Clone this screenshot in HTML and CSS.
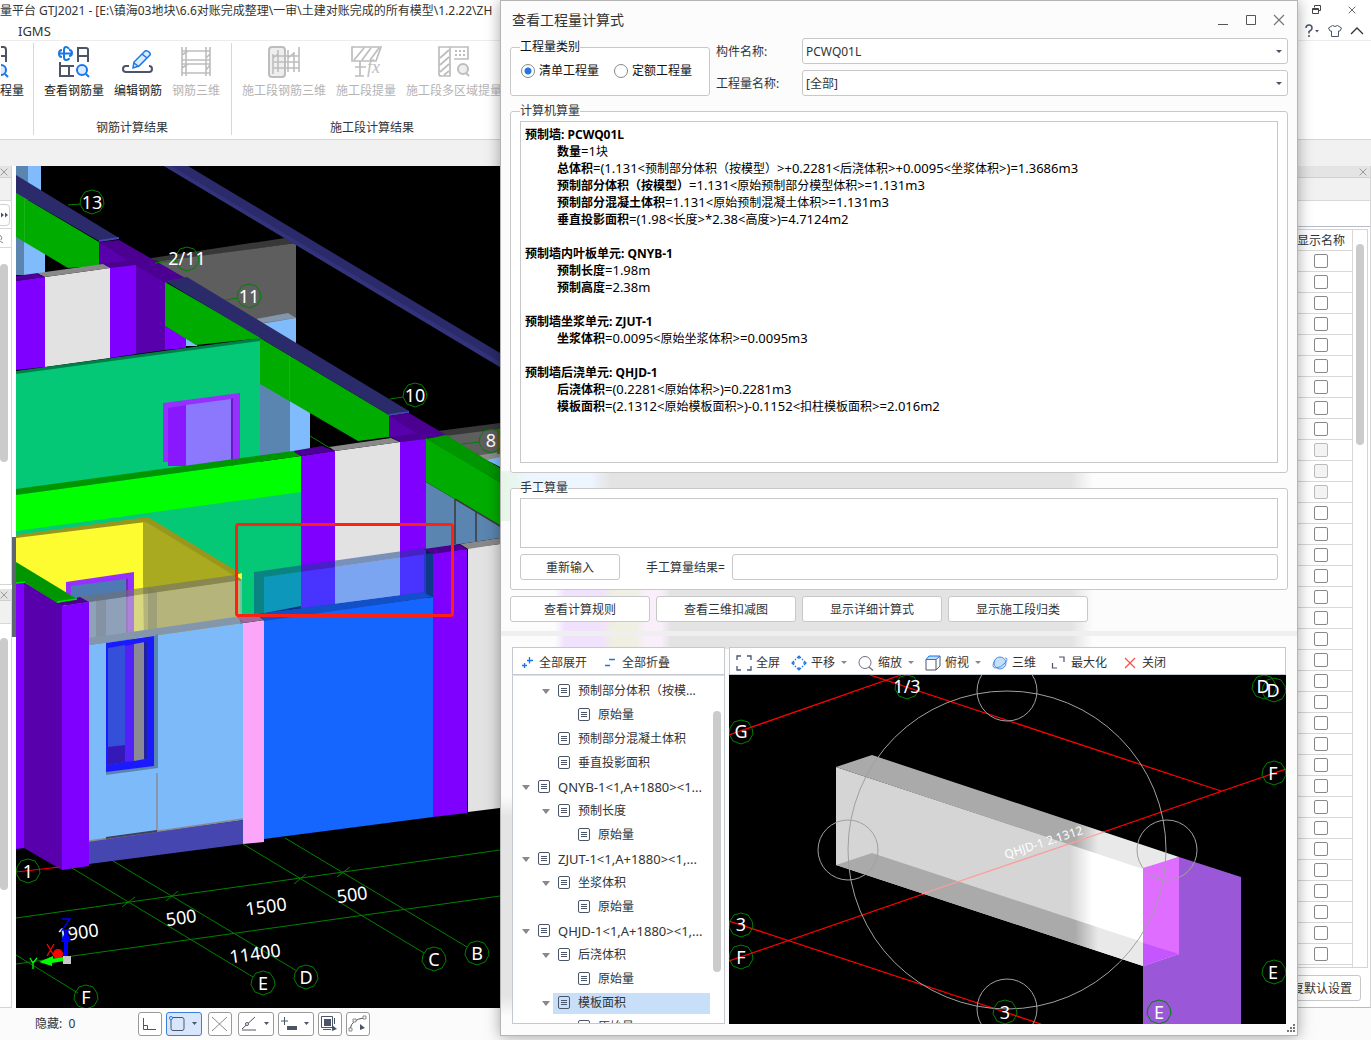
FILE: index.html
```html
<!DOCTYPE html>
<html lang="zh-CN">
<head>
<meta charset="utf-8">
<title>GTJ2021 - 查看工程量计算式</title>
<link rel="stylesheet" href="styles.css">
</head>
<body>
<svg class="defs" aria-hidden="true">
  <defs><path id="bubble" d="M13 1 20 3 24 9 25 15 21 22 13 25 5 22 1 15 2 9 6 3Z" fill="none" stroke="#008000"/></defs>
  <symbol id="doc" viewBox="0 0 12 14"><rect x=".5" y=".5" width="11" height="12" rx="1.5" fill="none" stroke="#4a5568"/><path d="M3 4.5h6M3 6.5h6M3 8.5h6" stroke="#4a5568"/></symbol>
  <symbol id="close" viewBox="0 0 12 12"><path d="M1 1 11 11M11 1 1 11" fill="none" stroke="currentColor" stroke-width="1.2"/></symbol>
</svg>
<div class="app">
  <header class="titlebar">
    <h1>量平台 GTJ2021 - [E:\镇海03地块\6.6对账完成整理\一审\土建对账完成的所有模型\1.2.22\ZH</h1>
    <div class="window-tools">
      <button aria-label="还原"><svg width="12" height="12"><path d="M3.500 3.500v-2h6v5h-2M1.500 4.500h6v5h-6zM1.500 5.500h6" fill="none" stroke="#444"/></svg></button>
      <button aria-label="关闭"><svg width="8" height="8" color="#444"><use href="#close"/></svg></button>
    </div>
  </header>
  <nav class="menubar">
    <a href="#igms">IGMS</a>
    <div class="menu-tools">
      <button aria-label="帮助"><svg width="16" height="14"><path d="M2 4Q2 1 5 1T8 4Q8 6 5 7.500V9.500M5 11v2" fill="none" stroke="#4a5568" stroke-width="1.500"/><path d="M11 6h4l-2 2.500z" fill="#4a5568"/></svg></button>
      <button aria-label="皮肤"><svg width="14" height="14"><path d="M4.500 1.500Q7 3.500 9.500 1.500L13.500 4 12 7H10.500V12.500H3.500V7H2L.5 4Z" fill="none" stroke="#4a5568"/></svg></button>
      <button aria-label="收起"><svg width="14" height="8"><path d="M1 7 7 1 13 7" fill="none" stroke="#333" stroke-width="1.300"/></svg></button>
    </div>
  </nav>
  <section class="ribbon">
    <div class="group first">
      <div class="items">
        <button class="tool"><svg width="22" height="32"><path d="M0 1H2.500Q5 1 5 4V16M0 10H5" fill="none" stroke="#4a5568" stroke-width="2"/><circle cx="0" cy="24" r="5" fill="#dbeafe" stroke="#1677e8" stroke-width="2"/><path d="M4 28 7 31" stroke="#1677e8" stroke-width="2"/></svg>程量</button>
      </div>
    </div>
    <div class="group">
      <div class="items">
        <button class="tool"><svg width="32" height="32"><path d="M11 3Q10 1 8 1Q6 1 6 4V11Q6 14 8 14Q11 14 11 12M1 7.500H13M4 4Q1 4 1 7.500T4 11M11 4Q14 4 14 7T11 10" fill="none" stroke="#1677e8" stroke-width="2"/><path d="M20 16V2H28Q30 2 30 4V16M20 10H30M2 16V30H16M2 20H16M11 20V30" fill="none" stroke="#4a5568" stroke-width="2"/><circle cx="24" cy="24" r="5" fill="#dbeafe" stroke="#1677e8" stroke-width="2"/><path d="M28 28 31 31" stroke="#1677e8" stroke-width="2"/></svg>查看钢筋量</button>
        <button class="tool"><svg width="32" height="32"><path d="M7 20H4Q1 20 1 23T4 26H27Q30 26 30 23T27 20" fill="none" stroke="#4a5568" stroke-width="2"/><path d="M11 22 12 16 23 5Q25 4 27 6T28 9L17 20ZM20 8 25 12M12 17 16 20" fill="#dbeafe" stroke="#1677e8" stroke-width="1.500"/></svg>编辑钢筋</button>
        <button class="tool" disabled><svg width="32" height="32"><path d="M2 1V30M6 1V30M26 1V30M30 1V30M2 5H30M2 14H30M2 18H30M2 27H30M2 9 8 5M2 22 8 18M26 12 30 8M26 24 30 19" fill="none" stroke="#bdbdbd" stroke-width="1.600"/></svg>钢筋三维</button>
      </div>
      <p>钢筋计算结果</p>
    </div>
    <div class="group wide">
      <div class="items">
        <button class="tool" disabled><svg width="32" height="32"><rect x="1" y="1" width="16" height="30" rx="3" fill="#eee" stroke="#bdbdbd" stroke-width="2"/><path d="M5 8V28M10 4V26M20 4V26M26 6V26M31 1V26M5 10H31M5 16H31M5 22H31M5 12 10 8M20 12 26 7" fill="none" stroke="#bdbdbd" stroke-width="1.600"/></svg>施工段钢筋三维</button>
        <button class="tool" disabled><svg width="32" height="32"><path d="M2 15V1H31L26 15ZM4 14 14 2M12 14 21 2M20 14 29 2M10 15V30M5 21H16M5 30H14" fill="none" stroke="#bdbdbd" stroke-width="1.700"/><text x="17" y="27" class="fx">fx</text></svg>施工段提量</button>
        <button class="tool" disabled><svg width="32" height="32"><path d="M1 1H12V30H3Q1 30 1 28ZM2 12 11 4M2 19 11 11M2 26 11 18M6 29 11 25M12 1H30V13H16" fill="none" stroke="#bdbdbd" stroke-width="1.700"/><path d="M17 5H28M17 9H28" stroke="#bdbdbd" stroke-width="2" stroke-dasharray="2 2"/><circle cx="25" cy="23" r="5" fill="#eee" stroke="#bdbdbd" stroke-width="2"/><path d="M28 27 31 30" stroke="#bdbdbd" stroke-width="2"/></svg>施工段多区域提量</button>
      </div>
      <p>施工段计算结果</p>
    </div>
  </section>
  <div class="strip"></div>
  <main class="workspace">
    <aside class="left">
      <div class="dock">
        <div class="dock-head"><svg width="8" height="8"><use href="#close"/></svg></div>
        <div class="dock-sub"></div>
        <div class="dock-row"><svg width="10" height="22"><path d="M0 .5H6Q9.500 .5 9.500 4V18Q9.500 21.500 6 21.500H0" fill="none" stroke="#d0d0d0"/><path d="M1 8.500 4 11 1 13.500ZM5 8.500 8 11 5 13.500Z" fill="#4a5568"/></svg></div>
        <div class="dock-search"><svg width="4" height="10"><path d="M0 1Q3 3 1 6M0 7 3 9" fill="none" stroke="#888"/></svg></div>
        <div class="thumb"></div>
      </div>
      <div class="dock lower">
        <div class="dock-head"><svg width="8" height="8"><use href="#close"/></svg></div>
        <div class="dock-sub"></div>
        <div class="thumb"></div>
      </div>
    </aside>
    <div class="splitter"><i></i></div>
    <svg class="scene" role="img" aria-label="三维模型">
      <g transform="translate(-16 -166)">
        <path fill="#5a85b0" d="M16 166H28V200H16ZM16 236 24 240V275H16Z"/>
        <path fill="#80bcfc" d="M28 166H41V200L28 190ZM24 241 45 252V275H24Z"/>
        <path fill="#383838" d="M145 259 285 238 296 243 163 262Z"/>
        <path fill="#5e5e5e" d="M155 262 296 243V345L200 300Z"/>
        <path fill="#8496ac" d="M256 319 288 313 296 318 263 323Z"/>
        <path fill="#80bcfc" d="M260 324 296 318V343L280 340Z"/>
        <path fill="#2b2b6b" d="M164 166H188L500 353V367Z"/>
        <path fill="#33337c" d="M164 166H171L500 362V367Z"/>
        <path fill="#00ac00" d="M16 193 99 242V266L68 268 16 237Z"/>
        <path fill="#1db01d" d="M24 198h1v43h-1z"/>
        <path fill="#2b2b6b" d="M16 175 119 238 99 241 16 193Z"/>
        <path fill="#4646b0" d="M99 240 119 237V239L99 242Z"/>
        <path fill="#5800ac" d="M99 242 136 262 165 281V350L136 354 99 300Z"/>
        <path fill="#4b0091" d="M99 242 119 240 187 279 165 283 130 262Z"/>
        <path fill="#4b0091" d="M102 264 136 259V265L110 269ZM16 276 38 273 45 277 16 281Z"/>
        <path fill="#7f00ff" d="M110 268 136 265V354L110 358ZM16 281 45 277V367L16 370ZM165 326 186 338V348L165 350Z"/>
        <path fill="#80bcfc" d="M186 338 198 346H186Z"/>
        <path fill="#e2e2e2" d="M45 277 110 268V358L45 367Z"/>
        <path fill="#898989" d="M38 273 103 264 110 268 45 277Z"/>
        <path fill="#5a85b0" d="M260 383 290 400V456H260Z"/>
        <path fill="#80bcfc" d="M290 400 310 411V452H290Z"/>
        <path fill="#00ac00" d="M165 282 262 338 196 345 165 326ZM255 335 389 415V437L358 441 255 381Z"/>
        <path fill="#1db01d" d="M289 356h1v44h-1z"/>
        <path fill="#2b2b6b" d="M165 281 187 277 409 411 389 415Z"/>
        <path fill="#4646b0" d="M389 414 409 411V413L389 416Z"/>
        <path fill="#5e5e5e" d="M438 436 500 428V465Z"/><path fill="#383838" d="M438 431 500 423V429L445 436Z"/>
        <path fill="#8c8c8c" d="M475 456 500 452V466Z"/><path fill="#80bcfc" d="M487 460 500 457V467Z"/>
        <path fill="#6a5a10" d="M497 430h3v24h-3z"/>
        <path fill="#05c877" d="M16 373 260 340V470L301 492V606L230 620 16 560Z"/>
        <path fill="#008048" d="M16 371 260 338V341L16 374Z"/>
        <path fill="#9630ff" d="M163 403 240 393V462H163Z"/>
        <path fill="#8a18ff" d="M168 408 186 405V466H168Z"/>
        <path fill="#8c78fc" d="M186 405 231 399V466H186Z"/><path fill="#6a1ac0" d="M231 399 233 398V466H231Z"/>
        <path fill="#00ff00" d="M16 495 301 456V492L16 531Z"/>
        <path fill="#009600" d="M16 489 293 451 301 456 16 495Z"/>
        <path fill="#7f00ff" d="M301 456 335 451V606L301 610ZM400 442 426 438V600H400ZM433 553 467 549V813L433 817Z"/>
        <path fill="#e2e2e2" d="M335 451 400 442V600L335 606ZM468 548 500 544V808L468 812Z"/>
        <path fill="#898989" d="M329 447 391 438 400 442 335 451ZM460 544 500 538V544L468 549Z"/>
        <path fill="#5a85b0" d="M426 482 500 526V538L460 544 426 550Z"/>
        <path fill="#4b0091" d="M293 451 322 446 335 451 301 456ZM389 416 409 413 446 435 426 439 400 442 391 437Z"/>
        <path fill="#5800ac" d="M389 416 416 433 389 438Z"/>
        <path fill="#00ac00" d="M426 438 500 482V526L426 482Z"/><path fill="#009600" d="M426 439 446 435 500 468V482Z"/>
        <path stroke="#3a3a3a" stroke-width="1.500" fill="none" d="M455 499V544M476 512V541M455 499 500 526"/>
        <path fill="#fdfc30" d="M16 537 143 520V645L16 660Z"/>
        <path fill="#aaaa20" d="M143 520 240 575V630L143 645Z"/>
        <path fill="#fdfc30" d="M143 580 144 640 134 642V588ZM235 575 242 573V580Z"/>
        <path fill="#9a961c" d="M16 535 148 517 240 573 235 576 146 522 16 538Z"/>
        <path fill="#9630ff" d="M66 582 134 572V645H66Z"/><path fill="#4e7ab4" d="M71 586 126 579V645H71Z"/>
        <path fill="#6d28c0" d="M126 579 128 578V645H126Z"/>
        <path fill="#7cbafa" d="M89 645 243 623V820L89 841Z"/>
        <path fill="#4646b0" d="M89 841 243 820V844L89 864Z"/>
        <path stroke="#8a8a90" fill="none" stroke-width="1.500" d="M89 841 243 819M157 773V831"/>
        <path fill="#bebebe" opacity=".58" d="M89 602 242 580V618L89 645Z"/>
        <path fill="#707070" opacity=".6" d="M77 597 235 575 242 580 89 602Z"/>
        <path fill="#707070" opacity=".3" d="M96 595 106 599V641L96 642ZM148 587 157 592V634L148 635Z"/>
        <path fill="#8496ac" d="M89 638 235 617 243 623 89 645Z"/>
        <path fill="#5a85b0" d="M154 636 158 634V768L106 775V771Z"/>
        <path fill="#1a1aff" d="M106 643 154 636V766L106 772Z"/>
        <path fill="#3450d8" d="M108 648 125 645V762L108 765Z"/><path fill="#5220f8" d="M125 646 134 644V761L125 762Z"/>
        <path fill="#8a8a96" d="M134 644 145 642V759L134 761Z"/><path fill="#3418b8" d="M108 747 125 745V762L108 765Z"/><path fill="#2020a0" d="M144 642h3v117h-3z"/>
        <path stroke="#404060" stroke-width="2" d="M106 838 157 831"/>
        <path fill="#fba6f8" d="M243 623 264 620V842L243 844Z"/><path fill="#9c6a9a" d="M236 617 256 614 264 620 243 623Z"/>
        <path fill="#1466ff" d="M264 619 433 597V817L264 839Z"/><path fill="#1150c8" d="M256 614 424 592 433 597 264 621Z"/>
        <path fill="#1466ff" opacity=".5" d="M264 577 433 553V597L424 592 264 613Z"/>
        <path fill="#104090" opacity=".5" d="M254 572 424 548 433 553 264 577V613L254 614ZM424 554 433 553V597L424 592Z"/>
        <path fill="#4b0091" d="M424 549 460 544 467 549 433 554ZM57 603 80 597 89 602 62 606Z"/>
        <path fill="#7f00ff" d="M16 583 24 582V848L16 849ZM62 606 89 602V866L62 870Z"/>
        <path fill="#5800ac" d="M24 582 62 605V870L24 848Z"/>
        <path fill="#009600" d="M16 562 77 599 57 603 24 582 16 583Z"/><path stroke="#00e000" stroke-width="1.500" fill="none" d="M16 583 25 582M57 602 77 599"/>
        <rect x="236.500" y="524.500" width="216" height="91" rx="2" fill="none" stroke="#ff2212" stroke-width="3"/>
        <g fill="none" stroke="#008000">
          <path d="M16 918 500 850M16 964 500 896M72 868 253 977M113 861 297 971M243 844 424 953M285 838 467 947M16 955 78 993M122 907 135 897M166 901 178 891M294 884 306 874M337 877 350 867M68 205 81 204M155 263 178 260M225 300 238 298M390 399 403 397M462 444 479 442M310 436 330 448"/>
          <path stroke="#f00" d="M16 872 60 867"/>
        </g>
        <g>
          <use href="#bubble" x="79" y="189"/><use href="#bubble" x="174" y="246"/><use href="#bubble" x="236" y="283"/><use href="#bubble" x="402" y="382"/><use href="#bubble" x="478" y="428"/><use href="#bubble" x="15" y="858"/><use href="#bubble" x="250" y="970"/><use href="#bubble" x="293" y="964"/><use href="#bubble" x="421" y="946"/><use href="#bubble" x="464" y="940"/><use href="#bubble" x="73" y="984"/>
        </g>
        <g class="marks">
          <text x="92" y="209">13</text><text x="187" y="265">2/11</text><text x="249" y="303">11</text><text x="415" y="402">10</text><text x="491" y="447">8</text><text x="28" y="878">1</text><text x="263" y="990">E</text><text x="306" y="984">D</text><text x="434" y="966">C</text><text x="477" y="960">B</text><text x="86" y="1004">F</text>
          <text transform="translate(79 939) rotate(-8)">1900</text><text transform="translate(182 924) rotate(-8)">500</text><text transform="translate(267 913) rotate(-8)">1500</text><text transform="translate(353 901) rotate(-8)">500</text><text transform="translate(256 960) rotate(-8)">11400</text>
        </g>
        <path fill="#00f" d="M64 958V942H61L66 929 71 942H68V958Z"/><circle cx="58" cy="954" r="5" fill="#f00"/>
        <path fill="#0f0" d="M64 957 53 959V956L39 962 52 966V963L64 961Z"/><path fill="#c8c8c8" d="M63 956h8v8h-8z"/>
        <path fill="none" stroke-width="1.300" stroke="#00f" d="M62 919H70L62 930H70"/><path fill="none" stroke-width="1.300" stroke="#f00" d="M47 944 54 956M54 944 47 956"/><path fill="none" stroke-width="1.300" stroke="#0f0" d="M30 958 33 963 37 958M33 963V969"/>
      </g>
    </svg>
    <aside class="right">
      <div class="dock-head"><svg width="8" height="8"><use href="#close"/></svg></div>
      <div class="dock-sub"></div>
      <div class="blank"></div>
      <div class="list">
        <table>
          <thead><tr><th>显示名称</th></tr></thead>
          <tbody>
            <tr><td><input type="checkbox" aria-label="显示名称 1"></td></tr>
            <tr><td><input type="checkbox" aria-label="显示名称 2"></td></tr>
            <tr><td><input type="checkbox" aria-label="显示名称 3"></td></tr>
            <tr><td><input type="checkbox" aria-label="显示名称 4"></td></tr>
            <tr><td><input type="checkbox" aria-label="显示名称 5"></td></tr>
            <tr><td><input type="checkbox" aria-label="显示名称 6"></td></tr>
            <tr><td><input type="checkbox" aria-label="显示名称 7"></td></tr>
            <tr><td><input type="checkbox" aria-label="显示名称 8"></td></tr>
            <tr><td><input type="checkbox" aria-label="显示名称 9"></td></tr>
            <tr><td><input type="checkbox" aria-label="显示名称 10" disabled></td></tr>
            <tr><td><input type="checkbox" aria-label="显示名称 11" disabled></td></tr>
            <tr><td><input type="checkbox" aria-label="显示名称 12" disabled></td></tr>
            <tr><td><input type="checkbox" aria-label="显示名称 13"></td></tr>
            <tr><td><input type="checkbox" aria-label="显示名称 14"></td></tr>
            <tr><td><input type="checkbox" aria-label="显示名称 15"></td></tr>
            <tr><td><input type="checkbox" aria-label="显示名称 16"></td></tr>
            <tr><td><input type="checkbox" aria-label="显示名称 17"></td></tr>
            <tr><td><input type="checkbox" aria-label="显示名称 18"></td></tr>
            <tr><td><input type="checkbox" aria-label="显示名称 19"></td></tr>
            <tr><td><input type="checkbox" aria-label="显示名称 20"></td></tr>
            <tr><td><input type="checkbox" aria-label="显示名称 21"></td></tr>
            <tr><td><input type="checkbox" aria-label="显示名称 22"></td></tr>
            <tr><td><input type="checkbox" aria-label="显示名称 23"></td></tr>
            <tr><td><input type="checkbox" aria-label="显示名称 24"></td></tr>
            <tr><td><input type="checkbox" aria-label="显示名称 25"></td></tr>
            <tr><td><input type="checkbox" aria-label="显示名称 26"></td></tr>
            <tr><td><input type="checkbox" aria-label="显示名称 27"></td></tr>
            <tr><td><input type="checkbox" aria-label="显示名称 28"></td></tr>
            <tr><td><input type="checkbox" aria-label="显示名称 29"></td></tr>
            <tr><td><input type="checkbox" aria-label="显示名称 30"></td></tr>
            <tr><td><input type="checkbox" aria-label="显示名称 31"></td></tr>
            <tr><td><input type="checkbox" aria-label="显示名称 32"></td></tr>
            <tr><td><input type="checkbox" aria-label="显示名称 33"></td></tr>
            <tr><td><input type="checkbox" aria-label="显示名称 34"></td></tr>
            <tr><td><input type="checkbox" aria-label="显示名称 35"></td></tr>
          </tbody>
        </table>
        <div class="track"><div class="thumb"></div></div>
      </div>
      <div class="foot"><button class="btn">恢复默认设置</button></div>
    </aside>
  </main>
  <footer class="status">
    <span>隐藏:&nbsp; 0</span>
    <div class="snap">
      <button aria-label="正交"><svg width="24" height="22"><path d="M5.500 5V16.500H18M5.500 12.500H9.500V16" fill="none" stroke="#4a5568"/></svg></button>
      <button class="on" aria-label="矩形捕捉"><svg width="36" height="22"><rect x="5" y="4.500" width="13" height="13" rx="2" fill="none" stroke="#4a5568"/><circle cx="5" cy="5" r="1.500" fill="#fff" stroke="#1677e8"/><path d="M26 9h5l-2.500 3z" fill="#4a5568"/></svg></button>
    </div>
    <div class="snap"><button aria-label="交点"><svg width="24" height="22"><path d="M4 4 19 18M19 4 4 18" fill="none" stroke="#888"/></svg></button></div>
    <div class="snap">
      <button aria-label="角度"><svg width="36" height="22"><path d="M4 16 17 4" stroke="#4a5568"/><path d="M4 17h14" stroke="#aaa" stroke-width="2"/><circle cx="9" cy="11" r="1.500" fill="#fff" stroke="#4a5568"/><path d="M26 9h5l-2.500 3z" fill="#4a5568"/></svg></button>
      <button aria-label="偏移"><svg width="36" height="22"><path d="M3 8H10M6.500 4V12" stroke="#4a5568"/><rect x="9" y="13" width="10" height="4" fill="#4a5568"/><path d="M26 9h5l-2.500 3z" fill="#4a5568"/></svg></button>
      <button aria-label="选择"><svg width="24" height="22"><rect x="6" y="6" width="7" height="7" fill="#4a5568"/><path d="M3.500 3.500h11v11h-11zM5 16.500h8M16.500 5v6" fill="none" stroke="#4a5568"/><path d="M14 12 19 16 14 18Z" fill="#4a5568"/></svg></button>
      <button aria-label="曲线"><svg width="24" height="22"><path d="M4 16Q6 6 18 5" fill="none" stroke="#4a5568"/><path d="M3 15h3v3H3zM7 6h3v3H7zM17 3h3v3h-3z" fill="#fff" stroke="#888"/><path d="M14 11 19 15 14 17Z" fill="#4a5568"/></svg></button>
    </div>
  </footer>
</div>

<section class="dialog" role="dialog" aria-labelledby="dlg-title">
  <header class="dlg-title">
    <h2 id="dlg-title">查看工程量计算式</h2>
    <div class="dlg-tools">
      <button aria-label="最小化"><svg width="12" height="12"><path d="M1 10.500h10" stroke="#555"/></svg></button>
      <button aria-label="最大化"><svg width="12" height="12"><path d="M1.500 1.500h9v9h-9z" fill="none" stroke="#555"/></svg></button>
      <button aria-label="关闭"><svg width="12" height="12" color="#777"><use href="#close"/></svg></button>
    </div>
  </header>
  <form class="filters">
    <fieldset class="kind">
      <legend>工程量类别</legend>
      <label><input type="radio" name="kind" checked>清单工程量</label>
      <label><input type="radio" name="kind">定额工程量</label>
    </fieldset>
    <label for="part">构件名称:</label>
    <div class="select"><select id="part"><option>PCWQ01L</option></select></div>
    <label for="qty">工程量名称:</label>
    <div class="select"><select id="qty"><option>[全部]</option></select></div>
  </form>
  <fieldset class="calc">
    <legend>计算机算量</legend>
    <div class="output">
      <h3>预制墙: PCWQ01L</h3>
      <p><b>数量</b>=1<em>块</em></p>
      <p><b>总体积</b>=(1.131&lt;<em>预制部分体积（按模型）</em>&gt;+0.2281&lt;<em>后浇体积</em>&gt;+0.0095&lt;<em>坐浆体积</em>&gt;)=1.3686m3</p>
      <p><b>预制部分体积（按模型）</b>=1.131&lt;<em>原始预制部分模型体积</em>&gt;=1.131m3</p>
      <p><b>预制部分混凝土体积</b>=1.131&lt;<em>原始预制混凝土体积</em>&gt;=1.131m3</p>
      <p><b>垂直投影面积</b>=(1.98&lt;<em>长度</em>&gt;*2.38&lt;<em>高度</em>&gt;)=4.7124m2</p>
      <h3>预制墙内叶板单元: QNYB-1</h3>
      <p><b>预制长度</b>=1.98m</p>
      <p><b>预制高度</b>=2.38m</p>
      <h3>预制墙坐浆单元: ZJUT-1</h3>
      <p><b>坐浆体积</b>=0.0095&lt;<em>原始坐浆体积</em>&gt;=0.0095m3</p>
      <h3>预制墙后浇单元: QHJD-1</h3>
      <p><b>后浇体积</b>=(0.2281&lt;<em>原始体积</em>&gt;)=0.2281m3</p>
      <p><b>模板面积</b>=(2.1312&lt;<em>原始模板面积</em>&gt;)-0.1152&lt;<em>扣柱模板面积</em>&gt;=2.016m2</p>
    </div>
  </fieldset>
  <fieldset class="manual">
    <legend>手工算量</legend>
    <textarea aria-label="手工算量"></textarea>
    <div class="manual-row">
      <button class="btn">重新输入</button>
      <label for="result">手工算量结果=</label>
      <input id="result" type="text">
    </div>
  </fieldset>
  <div class="actions">
    <button class="btn">查看计算规则</button>
    <button class="btn">查看三维扣减图</button>
    <button class="btn">显示详细计算式</button>
    <button class="btn">显示施工段归类</button>
  </div>
  <div class="divider"></div>
  <div class="viewer">
    <section class="pane">
      <div class="toolbar tree-tools">
        <button><svg width="12" height="14"><path d="M6 4.500H12M8.500 1V7.500M1 9.500H6M3.500 7V12" stroke="#1677e8" stroke-width="1.300"/></svg>全部展开</button>
        <button><svg width="12" height="14"><path d="M5 3.500H11M1 9.500H6" stroke="#1677e8" stroke-width="1.300"/></svg>全部折叠</button>
      </div>
      <div class="tree">
        <ul>
          <li class="l1 open"><span><svg><use href="#doc"/></svg>预制部分体积（按模...</span></li>
          <li class="l2"><span><svg><use href="#doc"/></svg>原始量</span></li>
          <li class="l1"><span><svg><use href="#doc"/></svg>预制部分混凝土体积</span></li>
          <li class="l1"><span><svg><use href="#doc"/></svg>垂直投影面积</span></li>
          <li class="l0 open"><span><svg><use href="#doc"/></svg>QNYB-1&lt;1,A+1880&gt;&lt;1...</span></li>
          <li class="l1 open"><span><svg><use href="#doc"/></svg>预制长度</span></li>
          <li class="l2"><span><svg><use href="#doc"/></svg>原始量</span></li>
          <li class="l0 open"><span><svg><use href="#doc"/></svg>ZJUT-1&lt;1,A+1880&gt;&lt;1,...</span></li>
          <li class="l1 open"><span><svg><use href="#doc"/></svg>坐浆体积</span></li>
          <li class="l2"><span><svg><use href="#doc"/></svg>原始量</span></li>
          <li class="l0 open"><span><svg><use href="#doc"/></svg>QHJD-1&lt;1,A+1880&gt;&lt;1,...</span></li>
          <li class="l1 open"><span><svg><use href="#doc"/></svg>后浇体积</span></li>
          <li class="l2"><span><svg><use href="#doc"/></svg>原始量</span></li>
          <li class="l1 open selected"><span><svg><use href="#doc"/></svg>模板面积</span></li>
          <li class="l2"><span><svg><use href="#doc"/></svg>原始量</span></li>
        </ul>
        <div class="thumb"></div>
      </div>
    </section>
    <section class="pane">
      <div class="toolbar">
        <button><svg width="16" height="16"><path d="M1 5V1H5M11 1H15V5M15 11V15H11M5 15H1V11" fill="none" stroke="#4a5568" stroke-width="1.300"/></svg>全屏</button>
        <button class="more"><svg width="16" height="16"><path d="M6 3 8 1 10 3M6 13 8 15 10 13M3 6 1 8 3 10M13 6 15 8 13 10M8 1V4M8 12V15M1 8H4M12 8H15M4 5 5 4M11 4 12 5M4 11 5 12M11 12 12 11" fill="none" stroke="#1677e8" stroke-width="1.200"/></svg>平移</button>
        <button class="more"><svg width="16" height="16"><circle cx="7" cy="7.500" r="6" fill="none" stroke="#6b7280"/><path d="M11 12 15 15.500" stroke="#6b7280" stroke-width="1.300"/></svg>缩放</button>
        <button class="more"><svg width="16" height="16"><path d="M1 4.500H11V15H1ZM15 1V11L11 15" fill="none" stroke="#4a5568"/><path d="M1 4.500 4 1H15L11 4.500Z" fill="#bfdbfe" stroke="#1677e8"/></svg>俯视</button>
        <button><svg width="16" height="16"><circle cx="8" cy="8" r="6" fill="#c7defa" stroke="#4b8fe8"/><path d="M3 5Q-1 12 3 13 9 13 13 8T13 3" fill="none" stroke="#4b8fe8"/></svg>三维</button>
        <button class="spaced"><svg width="16" height="16"><path d="M8 2H13V7M1.500 8V13H6" fill="none" stroke="#4a5568" stroke-width="1.200"/></svg>最大化</button>
        <button class="spaced"><svg width="16" height="16"><path d="M3 3 13 13M13 3 3 13" stroke="#ff4a4a" stroke-width="1.200"/></svg>关闭</button>
      </div>
      <svg class="scene" role="img" aria-label="构件三维视图">
        <defs>
          <linearGradient id="face" gradientUnits="userSpaceOnUse" x1="1070" y1="0" x2="1092" y2="0"><stop stop-color="#d5d5d5"/><stop offset="1" stop-color="#fff"/></linearGradient>
          <linearGradient id="edge" gradientUnits="userSpaceOnUse" x1="1075" y1="0" x2="1098" y2="0"><stop stop-color="#aaa"/><stop offset="1" stop-color="#e9e9e9"/></linearGradient>
        </defs>
        <g transform="translate(-729 -675)">
          <path stroke="#f00" stroke-width="1.300" fill="none" d="M729 735 901 675M870 675 1221 791M729 961 1286 769M729 921 1041 1024"/>
          <path fill="#9a58d8" d="M1143 868 1179 857 1241 877V1024H1143Z"/>
          <path fill="url(#face)" d="M836 767 1143 868V966L836 865Z"/>
          <path fill="url(#edge)" d="M836 767 872 755 1179 857 1143 869ZM836 865 872 853 1179 954 1143 966Z"/>
          <path fill="#df6dff" d="M1143 868 1179 857V954L1143 966Z"/><path fill="#c455ff" d="M1143 943 1179 954 1143 966Z"/>
          <path stroke="#ff9c9c" stroke-width="1.300" d="M922 894 1104 832"/>
          <g fill="none" stroke="#a0a0a0"><circle cx="1007" cy="850" r="159"/><circle cx="1007" cy="691" r="30"/><circle cx="848" cy="850" r="30"/><circle cx="1167" cy="850" r="30"/><circle cx="1007" cy="1009" r="30"/></g>
          <g><use href="#bubble" x="894" y="674"/><use href="#bubble" x="728" y="719"/><use href="#bubble" x="728" y="912"/><use href="#bubble" x="728" y="944"/><use href="#bubble" x="1251" y="674"/><use href="#bubble" x="1261" y="677"/><use href="#bubble" x="1261" y="760"/><use href="#bubble" x="1261" y="959"/><use href="#bubble" x="992" y="999"/><use href="#bubble" x="1146" y="999"/></g>
          <g class="marks"><text x="907" y="693">1/3</text><text x="741" y="738">G</text><text x="741" y="931">3</text><text x="741" y="964">F</text><text x="1263" y="693">D</text><text x="1273" y="697">D</text><text x="1273" y="780">F</text><text x="1273" y="979">E</text><text x="1005" y="1019">3</text><text x="1159" y="1019">E</text></g>
          <text class="tag" transform="translate(1006 859) rotate(-18)">QHJD-1 2.1312</text>
        </g>
      </svg>
    </section>
  </div>
  <svg class="grip" width="10" height="10"><path d="M7 0h2v2H7zM7 3h2v2H7zM4 3h2v2H4zM7 6h2v2H7zM4 6h2v2H4zM1 6h2v2H1z" fill="#777"/></svg>
</section>
</body>
</html>
```

FILE: styles.css
```css
* { box-sizing: border-box; }
html, body { height: 100%; margin: 0; }
body {
  position: relative;
  overflow: hidden;
  font: 12px/16px "Noto Sans", "Noto Sans CJK SC", sans-serif;
  color: #333;
  background: #fff;
}
h1, h2, h3, p, ul { margin: 0; padding: 0; font-weight: normal; }
ul { list-style: none; }
svg { display: block; flex: none; }
button, input, select, textarea { font: inherit; color: inherit; margin: 0; }
button { display: flex; align-items: center; justify-content: center; padding: 0; border: 0; background: none; }
a { color: inherit; text-decoration: none; }
.defs { position: absolute; width: 0; height: 0; }
.thumb { background: #cbcbcb; border-radius: 4px; }

/* application window */
.app { display: flex; flex-direction: column; height: 100%; }
.titlebar { display: flex; justify-content: space-between; height: 22px; }
.titlebar h1 { font-size: 12px; line-height: 22px; white-space: nowrap; }
.window-tools { display: flex; gap: 25px; padding-right: 15px; height: 20px; }
.menubar { display: flex; justify-content: space-between; height: 19px; border-bottom: 1px solid #ececec; padding: 0 7px 0 18px; line-height: 18px; font-size: 13px; }
.menu-tools { display: flex; gap: 8px; }
.ribbon { display: flex; height: 99px; border-bottom: 1px solid #d4d4d4; overflow: hidden; }
.group { flex: none; margin: 2px 0 4px; padding: 3px 11px 0 10px; border-right: 1px solid #d8d8d8; text-align: center; }
.group.first { width: 34px; padding-left: 0; }
.group.wide { padding-right: 14px; border: 0; }
.items { display: flex; gap: 10px; height: 74px; align-items: flex-start; }
.tool { flex-direction: column; gap: 5px; white-space: nowrap; color: #222; }
.tool:disabled { color: #b4b4b4; }
.fx { font: italic 18px "Liberation Serif", serif; fill: #bdbdbd; }
.strip { height: 26px; background: #f1f1f1; }
.workspace { display: flex; flex: 1; min-height: 0; }
.scene { flex: 1; min-width: 0; min-height: 0; background: #000; overflow: hidden; }
.marks { font-size: 18px; fill: #fff; text-anchor: middle; }
.tag { font-size: 12px; fill: #fff; }

.left { display: flex; flex-direction: column; gap: 4px; width: 12px; }
.dock { height: 419px; border: solid #d4d4d4; border-width: 0 1px 1px 0; }
.dock.lower { flex: 1; height: auto; }
.dock-head { display: flex; align-items: center; height: 12px; background: #e4e4e4; border-bottom: 1px solid #d0d0d0; color: #888; }
.dock-sub { height: 23px; background: #f1f1f1; border-bottom: 1px solid #d8d8d8; }
.dock-row { height: 28px; padding-top: 3px; border-bottom: 1px solid #d8d8d8; }
.dock-search { height: 19px; padding-top: 5px; border-bottom: 1px solid #d8d8d8; }
.dock .thumb { width: 8px; height: 198px; margin-top: 16px; }
.dock.lower .thumb { height: 252px; margin-top: 14px; }
.splitter { display: flex; align-items: center; width: 4px; background: #fff; }
.splitter i { width: 4px; height: 100px; background: #5b6670; }

.right { display: flex; flex-direction: column; width: 100px; background: #fff; border-right: 1px solid #d4d4d4; border-bottom: 1px solid #b8bcc8; }
.right .dock-head { justify-content: flex-end; padding-right: 3px; }
.blank { height: 26px; border-bottom: 1px solid #b8bcc8; }
.list { display: flex; flex: 1; min-height: 0; overflow: hidden; margin: 2px 2px 0 0; border: 1px solid #d4d4d4; border-left: 0; }
.list table { flex: 1; margin-left: 19px; border-collapse: collapse; align-self: flex-start; }
.list th, .list td { height: 21px; padding: 0; border: solid #d8d8d8; border-width: 0 1px 1px 0; text-align: center; font-weight: normal; white-space: nowrap; }
.list th { height: 20px; padding-top: 2px; }
.list input { display: block; appearance: none; width: 14px; height: 14px; margin: 0 auto; border: 1px solid #888; border-radius: 2px; background: #fff; }
.list input:disabled { border-color: #bbb; background: #f3f3f3; }
.track { width: 14px; padding: 14px 3px 0; }
.track .thumb { height: 201px; }
.foot { display: flex; justify-content: flex-end; padding: 7px 9px 6px; }
.btn { flex: none; height: 26px; padding: 1px 8px 0; border: 1px solid #c8c8c8; border-radius: 3px; background: #fff; white-space: nowrap; }

.status { display: flex; align-items: center; gap: 6px; height: 32px; background: #fbfbfb; padding-left: 35px; }
.status > span { width: 97px; }
.snap { display: flex; gap: 4px; }
.snap button { height: 24px; border: 1px solid #999; border-radius: 3px; background: #fff; overflow: hidden; }
.snap svg { margin: 0 -1px; }
.snap .on { border-color: #3a7fd8; background: #d8e6fb; }

/* calculation window */
.dialog {
  position: absolute;
  inset: 0 73px 4px 500px;
  display: flex;
  flex-direction: column;
  padding: 0 9px 11px;
  border: 1px solid #b4b4b4;
  box-shadow: 0 1px 14px rgba(0, 0, 0, .35);
  background-color: #fcfcfc;
  background-image:
    linear-gradient(90deg, transparent 54px, #f0e2fc 64px, #f0e2fc 100px, #efefe2 112px, #efefe2 134px, #f8effa 144px, #f8effa 160px, #e3e3e3 170px, #e3e3e3 570px, transparent 592px),
    linear-gradient(90deg, #e6f5e6, #edf5ff 30px, #edf5ff 90px, #e3e3e3 110px, #e3e3e3 570px, transparent 592px),
    linear-gradient(transparent, #e4e4e4 20px, #e4e4e4 200px, transparent);
  background-size: 100% 60px, 100% 50px, 11px 220px;
  background-position: 0 588px, 0 470px, 0 795px;
  background-repeat: no-repeat;
}
.dlg-title { display: flex; flex: none; justify-content: space-between; height: 37px; padding: 0 3px 0 2px; }
.dlg-title h2 { font-size: 14px; line-height: 37px; }
.dlg-tools { display: flex; gap: 16px; }
fieldset { min-width: 0; margin: 0; padding: 2px 9px 9px; border: 1px solid #c8c8c8; border-radius: 3px; background: #fff; }
legend { padding: 0; height: 16px; line-height: 16px; }
.filters { display: grid; flex: none; grid-template: 26px 26px / 200px 80px 1fr; gap: 6px; align-items: center; }
.filters > label { padding-top: 2px; }
.kind { display: flex; grid-row: 1 / 3; gap: 14px; height: 57px; margin-top: 1px; padding-top: 8px; align-items: flex-start; color: #111; align-self: start; }
.kind label { display: flex; align-items: center; gap: 4px; white-space: nowrap; }
.kind input { appearance: none; width: 14px; height: 14px; margin: 0 0 0 1px; border: 1px solid #888; border-radius: 50%; background: #fff; }
.kind input:checked { background: radial-gradient(#2576e0 3px, #fff 4px); }
.select { position: relative; }
.select select { display: block; appearance: none; width: 100%; height: 26px; padding: 1px 3px 0; border: 1px solid #c8c8c8; border-radius: 3px; background: #fff; }
.select::after { content: ""; position: absolute; right: 6px; top: 12px; border: 3px solid transparent; border-top-color: #4a5568; border-bottom: 0; }
.calc { display: flex; flex: 1; flex-direction: column; min-height: 0; margin-top: 7px; }
.output { flex: 1; padding: 4px; border: 1px solid #c8c8c8; overflow: hidden; color: #000; white-space: nowrap; }
.output h3 { font-size: 12px; line-height: 17px; font-weight: bold; }
.output p + h3 { margin-top: 17px; }
.output p { padding-left: 32px; font-size: 13px; line-height: 17px; }
.output b, .output em { font-size: 12px; line-height: 12px; font-style: normal; }
.manual { flex: none; margin-top: 7px; }
.manual textarea { display: block; width: 100%; height: 50px; border: 1px solid #c8c8c8; background: #fff; resize: none; }
.manual-row { display: flex; align-items: center; gap: 5px; margin-top: 6px; }
.manual-row .btn { width: 100px; }
.manual-row label { margin-left: 21px; padding-top: 1px; width: 81px; white-space: nowrap; }
.manual-row input { flex: 1; min-width: 0; height: 26px; border: 1px solid #c8c8c8; border-radius: 3px; background: #fff; }
.actions { display: flex; flex: none; gap: 6px; margin-top: 6px; }
.actions .btn { width: 140px; }
.divider { flex: none; height: 5px; margin: 9px -9px 0; background: #efefef; }
.viewer { display: grid; flex: none; grid-template-columns: 213px 1fr; gap: 4px; height: 377px; margin: 11px 2px 0; }
.pane { display: flex; flex-direction: column; min-width: 0; min-height: 0; }
.toolbar { display: flex; flex: none; gap: 11px; height: 28px; padding: 3px 6px 0; border: 1px solid #c4c8d0; background: #fff; }
.toolbar button { gap: 4px; white-space: nowrap; }
.tree-tools { gap: 17px; padding-left: 8px; }
.tree-tools button { gap: 6px; }
.toolbar .spaced { padding-left: 4px; }
.more::after { content: ""; margin-left: 2px; border: 3px solid transparent; border-top-color: #888; border-bottom: 0; }
.tree { display: flex; flex: 1; justify-content: space-between; min-height: 0; padding: 3px 3px 0 0; border: 1px solid #c4c8d0; border-top-color: #e0e0e0; background: #fff; overflow: hidden; }
.tree ul { width: 197px; }
.tree li { display: flex; align-items: center; height: 24px; }
.tree li::before { content: ""; width: 8px; margin-right: 3px; flex: none; }
.tree .open::before { width: 0; border: 4px solid transparent; border-top: 5px solid #888; border-bottom: 0; }
.tree span { display: flex; flex: 1; align-items: center; gap: 8px; height: 21px; padding-left: 5px; white-space: nowrap; }
.tree svg { width: 12px; height: 14px; }
.l0 { padding-left: 9px; font-size: 13px; }
.l1 { padding-left: 29px; }
.l2 { padding-left: 49px; }
.selected span { background: #c8dffa; }
.tree .thumb { width: 8px; height: 261px; margin-top: 32px; }
.grip { position: absolute; right: 1px; bottom: 1px; }
```
